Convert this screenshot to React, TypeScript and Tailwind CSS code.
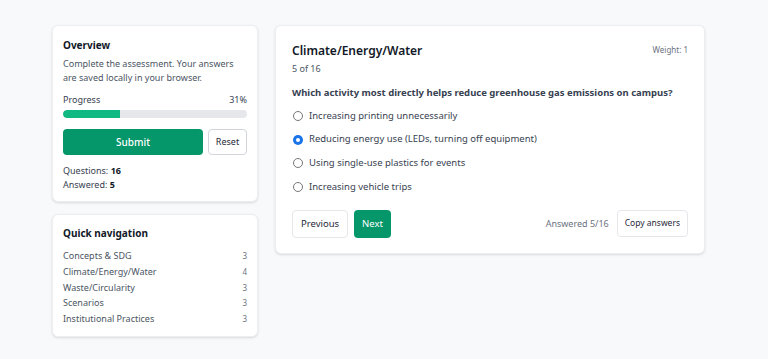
const sections = [
  { label: "Concepts & SDG", count: 3 },
  { label: "Climate/Energy/Water", count: 4 },
  { label: "Waste/Circularity", count: 3 },
  { label: "Scenarios", count: 3 },
  { label: "Institutional Practices", count: 3 },
];

const options = [
  "Increasing printing unnecessarily",
  "Reducing energy use (LEDs, turning off equipment)",
  "Using single-use plastics for events",
  "Increasing vehicle trips",
];

export default function App() {
  return (
    <div
      className="min-h-screen bg-[#f8f9fb] text-[#1f2937]"
      style={{ fontFamily: '"Noto Sans", "Open Sans", sans-serif' }}
    >
      <div className="flex items-start gap-[17px] pl-[52px] pt-[25px]">
        {/* sidebar */}
        <div className="flex w-[206px] shrink-0 flex-col gap-[12px]">
          <div className="rounded-md border border-[#eceef1] bg-white px-[10px] pb-[9px] pt-[12px] shadow-sm">
            <p className="text-[10px] font-bold leading-[14px] text-[#111827]">Overview</p>
            <p className="mt-[5px] text-[9px] leading-[14px] text-[#4b5563]">
              Complete the assessment. Your answers are saved locally in your browser.
            </p>
            <div className="mt-[9px] flex items-center justify-between text-[9px] leading-[12px] text-[#374151]">
              <span>Progress</span>
              <span>31%</span>
            </div>
            <div className="mt-[4px] h-[8px] w-full overflow-hidden rounded-full bg-[#e5e7eb]">
              <div className="h-full rounded-l-full bg-[#10b981]" style={{ width: "31%" }} />
            </div>
            <div className="mt-[11px] flex gap-[5px]">
              <button className="h-[26px] flex-1 rounded-[4px] bg-[#059669] text-[10px] font-medium text-white">
                Submit
              </button>
              <button className="h-[26px] w-[39px] rounded-[4px] border border-[#d1d5db] bg-white text-[9px] text-[#1f2937]">
                Reset
              </button>
            </div>
            <div className="mt-[9px] text-[9px] leading-[14px] text-[#374151]">
              <p>
                Questions: <span className="font-bold text-[#111827]">16</span>
              </p>
              <p>
                Answered: <span className="font-bold text-[#111827]">5</span>
              </p>
            </div>
          </div>

          <div className="rounded-md border border-[#eceef1] bg-white px-[10px] pb-[9px] pt-[11px] shadow-sm">
            <p className="text-[10px] font-bold leading-[14px] text-[#111827]">Quick navigation</p>
            <ul className="mt-[8px] text-[9px] leading-[15.8px] text-[#4b5563]">
              {sections.map((s) => (
                <li key={s.label} className="flex items-center justify-between">
                  <span>{s.label}</span>
                  <span className="text-[8px] text-[#6b7280]">{s.count}</span>
                </li>
              ))}
            </ul>
          </div>
        </div>

        {/* main */}
        <div className="w-[430px] rounded-md border border-[#eceef1] bg-white px-[16px] pb-[15px] pt-[17px] shadow-sm">
          <div className="flex items-start justify-between">
            <div>
              <p className="text-[12px] font-semibold leading-[16px] text-[#111827]">Climate/Energy/Water</p>
              <p className="mt-[4px] text-[9px] leading-[12px] text-[#4b5563]">5 of 16</p>
            </div>
            <span className="mt-[1px] text-[8px] text-[#6b7280]">Weight: 1</span>
          </div>
          <p className="mt-[11px] text-[9.5px] font-bold leading-[14px] text-[#374151]">
            Which activity most directly helps reduce greenhouse gas emissions on campus?
          </p>
          <div className="mt-[4px] flex flex-col">
            {options.map((o, i) => (
              <label key={o} className="flex h-[23.7px] items-center gap-[6px] pl-[1px] text-[9.5px] text-[#374151]">
                {i === 1 ? (
                  <span className="grid h-[10px] w-[10px] place-items-center rounded-full bg-[#1a73e8]">
                    <span className="h-[4px] w-[4px] rounded-full bg-white" />
                  </span>
                ) : (
                  <span className="h-[10px] w-[10px] rounded-full border border-[#767676] bg-white" />
                )}
                <span>{o}</span>
              </label>
            ))}
          </div>
          <div className="mt-[11px] flex items-center justify-between">
            <div className="flex gap-[6px]">
              <button className="h-[28px] rounded-[4px] border border-[#e5e7eb] bg-white px-[8px] text-[9.5px] text-[#1f2937]">
                Previous
              </button>
              <button className="h-[28px] rounded-[4px] bg-[#059669] px-[8px] text-[9.5px] text-white">
                Next
              </button>
            </div>
            <div className="flex items-center gap-[8px]">
              <span className="text-[9px] text-[#6b7280]">Answered 5/16</span>
              <button className="h-[27px] rounded-[4px] border border-[#e5e7eb] bg-white px-[7px] text-[8.5px] text-[#1f2937]">
                Copy answers
              </button>
            </div>
          </div>
        </div>
      </div>
    </div>
  );
}
